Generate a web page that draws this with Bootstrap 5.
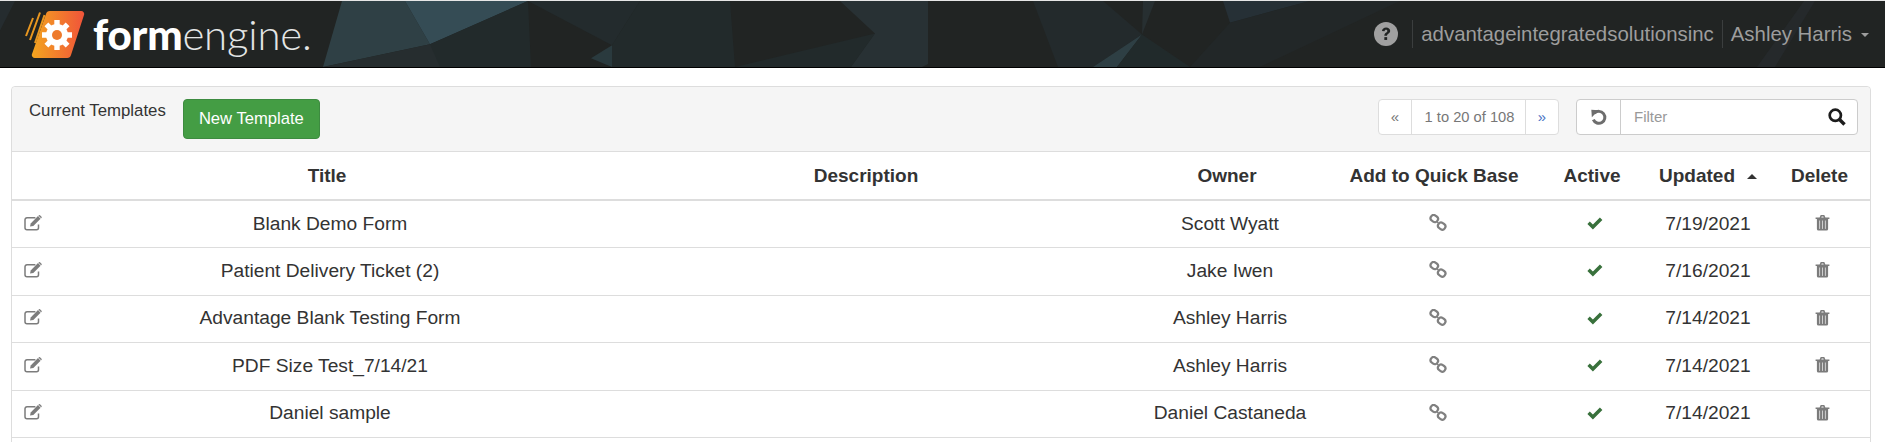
<!DOCTYPE html>
<html lang="en">
<head>
  <meta charset="UTF-8" />
  <meta name="viewport" content="width=device-width, initial-scale=1" />
  <title>formengine - Current Templates</title>
  <link href="https://cdn.jsdelivr.net/npm/bootstrap@5.3.0/dist/css/bootstrap.min.css" rel="stylesheet" />
  <style>
    html, body {
      height: 100%;
      overflow: hidden;
    }
    body {
      background: #fff;
      color: #333;
      font-family: "Liberation Sans", Arial, sans-serif;
      font-size: 17px;
      padding-top: 1px;
      box-shadow: inset 0 1px 0 #e6e6e6;
    }
    .fe-header {
      position: relative;
      height: 67px;
      background: #212423;
      border-bottom: 1px solid #000;
      padding: 0 16px 0 24px;
    }
    .fe-header-bg {
      position: absolute;
      inset: 0;
      width: 100%;
      height: 100%;
    }
    .fe-brand {
      position: relative;
      color: #fff;
      text-decoration: none;
      font-family: Lato, "Open Sans", sans-serif;
      font-size: 42px;
      line-height: 1;
      letter-spacing: -0.2px;
      gap: 8px;
    }
    .fe-brand b { font-weight: 900; }
    .fe-brand span { font-weight: 300; color: #e4e6e6; }
    .fe-usernav {
      position: relative;
      color: #9d9d9d;
      font-size: 20.4px;
    }
    .fe-usernav .fe-sep {
      border-left: 1px solid #3b3e3e;
      height: 28px;
      margin: 0 8px 0 8px;
    }
    .fe-usernav .fe-sep-first { margin-left: 14px; }
    .fe-caret {
      display: inline-block;
      border-top: 4px solid #9d9d9d;
      border-left: 4px solid transparent;
      border-right: 4px solid transparent;
      margin-left: 9px;
      vertical-align: middle;
    }
    .fe-panel {
      margin: 18px 0 0 11px;
      border: 1px solid #ddd;
      border-radius: 4px;
      width: 1860px;
    }
    .fe-toolbar {
      height: 65px;
      background: #f5f5f5;
      border-bottom: 1px solid #ddd;
      border-radius: 4px 4px 0 0;
      padding: 12px 12px 0 17px;
    }
    .fe-toolbar-title {
      font-size: 16.8px;
      margin-right: 17px;
      line-height: 22px;
      margin-top: 1px;
    }
    .fe-new-btn {
      height: 40px;
      width: 137px;
      padding: 0;
      background: #449d44;
      border: 1px solid #3d8b40;
      color: #fff;
      font-size: 16.6px;
      border-radius: 4px;
    }
    .fe-pager, .fe-filter {
      height: 36px;
      background: #fff;
      border: 1px solid #ddd;
      border-radius: 4px;
      font-size: 15px;
      color: #777;
    }
    .fe-pager { width: 181px; margin-right: 17px; }
    .fe-pager > div { height: 100%; }
    .fe-pager .fe-arrow { width: 32px; }
    .fe-pager .fe-count { width: 115px; font-size: 14.7px; padding-left: 2px; border-left: 1px solid #ddd; border-right: 1px solid #ddd; }
    .fe-arrow-next { color: #4a72c4; }
    .fe-filter { width: 282px; border-color: #ccc; }
    .fe-filter .fe-undo { width: 44px; height: 100%; border-right: 1px solid #ccc; }
    .fe-filter .fe-filter-text { padding-left: 13px; color: #999; }
    .fe-filter svg.fe-search { margin-right: 11px; }
    .fe-table {
      table-layout: fixed;
      width: 1858px;
      margin: 0;
      color: #333;
      font-size: 19.2px;
    }
    .fe-table > :not(caption) > * > * {
      padding: 0;
      border-bottom: 1px solid #ddd;
      text-align: center;
      vertical-align: middle;
      box-shadow: none;
      color: #333;
    }
    .fe-table thead th {
      height: 48px;
      border-bottom: 2px solid #ddd;
      font-size: 19px;
      font-weight: 700;
      padding-top: 2px;
    }
    .fe-table tbody td {
      height: 47.5px;
    }
    .fe-table .fe-col-edit { width: 33px; text-align: left; padding-left: 12px; }
    .fe-col-title { width: 564px; }
    .fe-col-desc { width: 514px; }
    .fe-col-owner { width: 208px; }
    .fe-col-qb { width: 206px; }
    .fe-col-active { width: 110px; }
    .fe-col-updated { width: 122px; }
    .fe-table .fe-col-delete { width: 101px; }
    .fe-table tbody .fe-shift { padding-left: 6px; }
    .fe-sort { margin-left: 12px; border-bottom: 5px solid #333; border-left: 5px solid transparent; border-right: 5px solid transparent; display: inline-block; vertical-align: middle; margin-bottom: 2px; }
    .fe-icon { display: inline-block; vertical-align: middle; }
    .fe-icon-edit { margin-bottom: 4px; }
    .fe-icon-link { margin-left: 7px; margin-bottom: 4px; }
    .fe-icon-trash { margin-left: 5px; margin-bottom: 4px; }
    .fe-icon-check { margin-left: 6px; margin-bottom: 2px; }
  </style>
</head>
<body>

  <svg class="d-none">
    <symbol id="i-edit" viewBox="0 0 20 16">
      <path d="M14.5 9.5v3.2a2 2 0 0 1-2 2H3a2 2 0 0 1-2-2V4.800a2 2 0 0 1 2-2h8.400" fill="none" stroke="#7c7c7c" stroke-width="1.500" />
      <path d="M6 11.600l.7-3.200L14 1.100l2.600 2.600-7.300 7.200z" fill="#7c7c7c" />
      <path d="M14.900 .3a.8 .8 0 0 1 1.100 0l1.500 1.500a.8 .8 0 0 1 0 1.100l-.4 .4-2.600-2.600z" fill="#7c7c7c" />
    </symbol>
    <symbol id="i-link" viewBox="0 0 18 17">
      <g fill="none" stroke="#808080" stroke-width="2.200">
        <rect x="1.500" y="1.500" width="7.600" height="6.200" rx="3" transform="rotate(35 5.300 4.600)" />
        <rect x="8.900" y="9" width="7.600" height="6.200" rx="3" transform="rotate(35 12.700 12.100)" />
      </g>
      <path d="M8 8l2 1.500" stroke="#808080" stroke-width="1.400" />
    </symbol>
    <symbol id="i-check" viewBox="0 0 16 13">
      <path d="M.4 6.900l2.400-2.400 3.100 3.100L12.900 .6l2.500 2.400-9.500 9.500z" fill="#39713c" />
    </symbol>
    <symbol id="i-trash" viewBox="0 0 15 17">
      <path d="M.6 3.400h13.800V5H.6zM4.600 3.400l1.100-2.400h3.600l1.100 2.400H8.700L8.300 2.400H6.700l-.4 1z" fill="#7b7b7b" />
      <path d="M1.900 5h11.200v10a1.600 1.600 0 0 1-1.600 1.600H3.500A1.600 1.600 0 0 1 1.900 15z" fill="#7b7b7b" />
      <path d="M4.600 6.500v8.400M7.500 6.500v8.400M10.400 6.500v8.400" stroke="#d0d0d0" stroke-width="1" />
    </symbol>
  </svg>

  <header class="fe-header d-flex align-items-center justify-content-between">
    <!-- fondo poligonal del header -->
    <svg class="fe-header-bg" viewBox="0 0 1885 67" preserveAspectRatio="none" aria-hidden="true">
      <polygon points="0,0 15,0 0,30" fill="#252c2f" />
      <polygon points="342,0 405,0 430,44 323,67" fill="#2f4045" />
      <polygon points="405,0 528,0 430,44" fill="#354c55" />
      <polygon points="430,44 528,0 531,67 425,67" fill="#222a2b" />
      <polygon points="323,67 430,44 440,67" fill="#262d2f" />
      <polygon points="528,0 640,0 612,45" fill="#232b2d" />
      <polygon points="612,45 591,58 612,67" fill="#2a3a3e" />
      <polygon points="612,45 640,0 730,0 735,67 612,67" fill="#222a2b" />
      <polygon points="735,67 875,33 851,67" fill="#222a2b" />
      <polygon points="840,0 928,0 928,64 922,67 851,67 875,33" fill="#283134" />
      <polygon points="1033,0 1103,0 1142,34 1093,67 1058,67" fill="#232a2c" />
      <polygon points="1142,34 1093,67 1117,67" fill="#2e3f44" />
      <polygon points="1142,34 1190,67 1117,67" fill="#212a2b" />
      <polygon points="1143,0 1155,0 1142,34" fill="#272f31" />
      <polygon points="1223,0 1310,0 1230,22" fill="#263036" />
      <polygon points="1310,0 1400,0 1260,67 1190,67 1230,22" fill="#222728" />
      <polygon points="1804,0 1815,0 1775,67 1757,67" fill="#25292b" />
    </svg>

    <a class="fe-brand d-flex align-items-center" href="#">
      <svg width="61" height="49" viewBox="0 0 61 49" aria-hidden="true">
        <defs>
          <linearGradient id="fe-grad" x1="0" x2="1" y1="0" y2="0">
            <stop offset="0" stop-color="#f3a51f" />
            <stop offset="1" stop-color="#f0543a" />
          </linearGradient>
        </defs>
        <path d="M6 30L16 2.500 M11 33L20.500 5 M2 26L9 8" stroke="#e99720" stroke-width="2" fill="none" />
        <path d="M26 1h31a3 3 0 0 1 3 4L47 45a4 4 0 0 1-4 3H11a3 3 0 0 1-3-4L22 4a4 4 0 0 1 4-3z" fill="url(#fe-grad)" />
        <circle cx="33" cy="25" r="11" fill="#fff" />
        <g stroke="#fff" stroke-width="5.400">
          <path d="M33 10v30M18 25h30M22.400 14.400l21.200 21.200M43.600 14.400L22.400 35.600" />
        </g>
        <circle cx="33" cy="25" r="5" fill="#ee7a2c" />
      </svg>
      <div><b>form</b><span>engine.</span></div>
    </a>

    <div class="fe-usernav d-flex align-items-center">
      <svg width="24" height="24" viewBox="0 0 23 23" aria-hidden="true">
        <circle cx="11.500" cy="11.500" r="11.500" fill="#a0a0a0" />
        <path d="M7.600 8.600c.3-2.200 1.900-3.400 4-3.400 2.200 0 3.900 1.300 3.900 3.300 0 2.800-3 2.800-3 4.700H9.900c0-3 2.900-3 2.900-4.600 0-.7-.6-1.200-1.300-1.200-.8 0-1.300 .5-1.500 1.500z" fill="#212423" />
        <rect x="9.900" y="14.500" width="2.700" height="2.700" fill="#212423" />
      </svg>
      <span class="fe-sep fe-sep-first"></span>
      <span>advantageintegratedsolutionsinc</span>
      <span class="fe-sep"></span>
      <span>Ashley Harris<i class="fe-caret"></i></span>
    </div>
  </header>

  <main class="fe-panel">
    <div class="fe-toolbar d-flex align-items-start">
      <div class="fe-toolbar-title">Current Templates</div>
      <button type="button" class="btn fe-new-btn">New Template</button>

      <div class="fe-pager d-flex ms-auto">
        <div class="fe-arrow d-flex align-items-center justify-content-center">«</div>
        <div class="fe-count d-flex align-items-center justify-content-center">1 to 20 of 108</div>
        <div class="fe-arrow fe-arrow-next d-flex align-items-center justify-content-center flex-grow-1">»</div>
      </div>

      <div class="fe-filter d-flex align-items-center">
        <div class="fe-undo d-flex align-items-center justify-content-center">
          <svg width="16" height="17" viewBox="0 0 15 15" aria-hidden="true">
            <path d="M3.300 3.500A5.600 5.600 0 1 1 2.200 9.500" fill="none" stroke="#6d6d6d" stroke-width="2.800" />
            <path d="M.3 .3L7.200 .8 .8 7.200z" fill="#6d6d6d" />
          </svg>
        </div>
        <div class="fe-filter-text flex-grow-1">Filter</div>
        <svg class="fe-search" width="18" height="18" viewBox="0 0 16 16" aria-hidden="true">
          <circle cx="6.500" cy="6.500" r="5" fill="none" stroke="#1c1c1c" stroke-width="2.400" />
          <path d="M10 10l4.700 4.700" stroke="#1c1c1c" stroke-width="3" />
        </svg>
      </div>
    </div>

    <table class="table fe-table">
      <thead>
        <tr>
          <th class="fe-col-edit"></th>
          <th class="fe-col-title">Title</th>
          <th class="fe-col-desc">Description</th>
          <th class="fe-col-owner">Owner</th>
          <th class="fe-col-qb">Add to Quick Base</th>
          <th class="fe-col-active">Active</th>
          <th class="fe-col-updated">Updated<i class="fe-sort"></i></th>
          <th class="fe-col-delete">Delete</th>
        </tr>
      </thead>
      <tbody id="templateRows"></tbody>
    </table>
  </main>

  <script>
    // Filas de la tabla de plantillas
    const templates = [
      { title: 'Blank Demo Form', owner: 'Scott Wyatt', updated: '7/19/2021' },
      { title: 'Patient Delivery Ticket (2)', owner: 'Jake Iwen', updated: '7/16/2021' },
      { title: 'Advantage Blank Testing Form', owner: 'Ashley Harris', updated: '7/14/2021' },
      { title: 'PDF Size Test_7/14/21', owner: 'Ashley Harris', updated: '7/14/2021' },
      { title: 'Daniel sample', owner: 'Daniel Castaneda', updated: '7/14/2021' }
    ];

    function icon(id, w, h, cls) {
      return `<svg class="fe-icon ${cls}" width="${w}" height="${h}"><use href="#${id}"></use></svg>`;
    }

    document.getElementById('templateRows').innerHTML = templates.map(t => `
      <tr>
        <td class="fe-col-edit">${icon('i-edit', 20, 16, 'fe-icon-edit')}</td>
        <td class="fe-shift">${t.title}</td>
        <td></td>
        <td class="fe-shift">${t.owner}</td>
        <td>${icon('i-link', 18, 17, 'fe-icon-link')}</td>
        <td>${icon('i-check', 16, 13, 'fe-icon-check')}</td>
        <td>${t.updated}</td>
        <td class="fe-col-delete">${icon('i-trash', 15, 17, 'fe-icon-trash')}</td>
      </tr>`).join('') + '<tr><td colspan="8"></td></tr>';
  </script>
  <script src="https://cdn.jsdelivr.net/npm/bootstrap@5.3.0/dist/js/bootstrap.bundle.min.js"></script>
</body>
</html>
